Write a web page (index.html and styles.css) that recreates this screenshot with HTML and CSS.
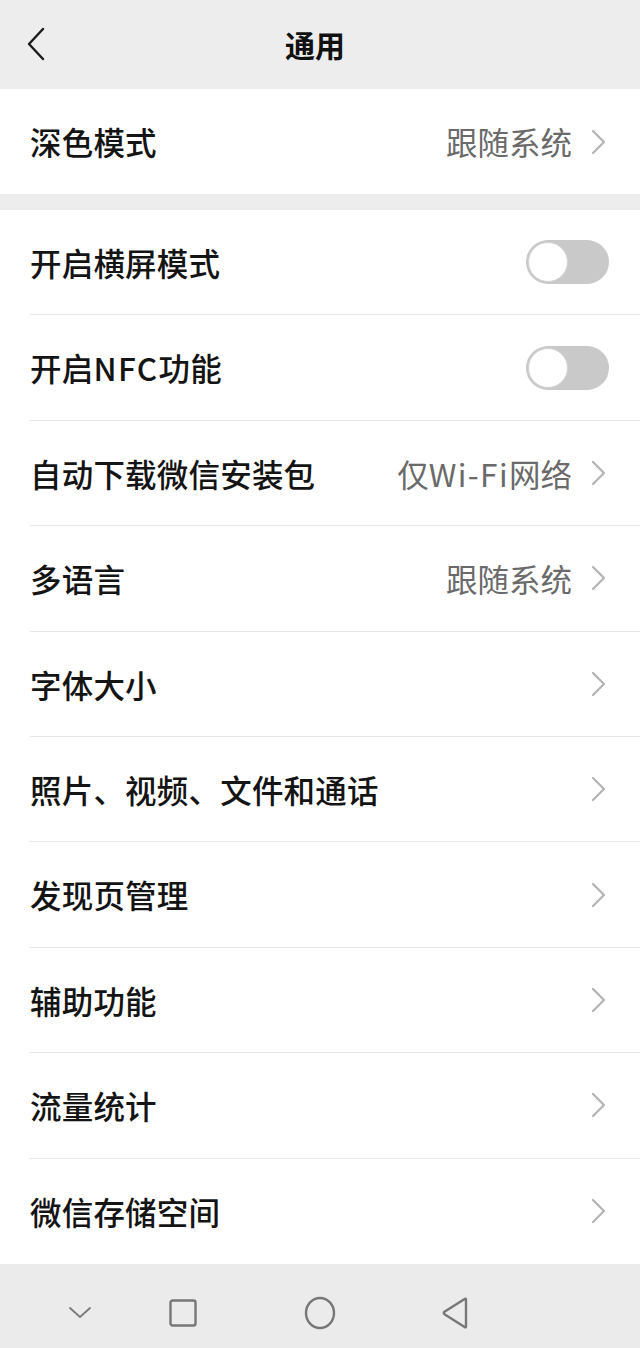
FILE: index.html
```html
<!DOCTYPE html>
<html lang="zh-CN">
<head>
<meta charset="utf-8">
<title>通用</title>
<link rel="stylesheet" href="styles.css">
</head>
<body>
<div class="screen">
  <header class="topbar">
    <span class="back">
      <svg width="20" height="34" viewBox="0 0 20 34"><path d="M17 2 L3 17 L17 32" fill="none" stroke="#1a1a1a" stroke-width="2.4" stroke-linecap="round" stroke-linejoin="round"/></svg>
    </span>
    <h1 class="title">通用</h1>
  </header>

  <section class="group first">
    <div class="row"><div class="row-inner">
      <span class="label">深色模式</span>
      <span class="value">跟随系统</span>
      <svg class="arrow" width="16" height="26" viewBox="0 0 16 26"><path d="M2 2 L13 13 L2 24" fill="none" stroke="#b3b3b3" stroke-width="2.2" stroke-linecap="round" stroke-linejoin="round"/></svg>
    </div></div>
  </section>

  <section class="group second">
    <div class="row"><div class="row-inner">
      <span class="label">开启横屏模式</span>
      <span class="toggle"><span class="knob"></span></span>
    </div></div>
    <div class="row"><div class="row-inner">
      <span class="label">开启<span class="latin">NFC</span>功能</span>
      <span class="toggle"><span class="knob"></span></span>
    </div></div>
    <div class="row"><div class="row-inner">
      <span class="label">自动下载微信安装包</span>
      <span class="value">仅<span class="latin">Wi-Fi</span>网络</span>
      <svg class="arrow" width="16" height="26" viewBox="0 0 16 26"><path d="M2 2 L13 13 L2 24" fill="none" stroke="#b3b3b3" stroke-width="2.2" stroke-linecap="round" stroke-linejoin="round"/></svg>
    </div></div>
    <div class="row"><div class="row-inner">
      <span class="label">多语言</span>
      <span class="value">跟随系统</span>
      <svg class="arrow" width="16" height="26" viewBox="0 0 16 26"><path d="M2 2 L13 13 L2 24" fill="none" stroke="#b3b3b3" stroke-width="2.2" stroke-linecap="round" stroke-linejoin="round"/></svg>
    </div></div>
    <div class="row"><div class="row-inner">
      <span class="label">字体大小</span>
      <svg class="arrow" width="16" height="26" viewBox="0 0 16 26"><path d="M2 2 L13 13 L2 24" fill="none" stroke="#b3b3b3" stroke-width="2.2" stroke-linecap="round" stroke-linejoin="round"/></svg>
    </div></div>
    <div class="row"><div class="row-inner">
      <span class="label">照片、视频、文件和通话</span>
      <svg class="arrow" width="16" height="26" viewBox="0 0 16 26"><path d="M2 2 L13 13 L2 24" fill="none" stroke="#b3b3b3" stroke-width="2.2" stroke-linecap="round" stroke-linejoin="round"/></svg>
    </div></div>
    <div class="row"><div class="row-inner">
      <span class="label">发现页管理</span>
      <svg class="arrow" width="16" height="26" viewBox="0 0 16 26"><path d="M2 2 L13 13 L2 24" fill="none" stroke="#b3b3b3" stroke-width="2.2" stroke-linecap="round" stroke-linejoin="round"/></svg>
    </div></div>
    <div class="row"><div class="row-inner">
      <span class="label">辅助功能</span>
      <svg class="arrow" width="16" height="26" viewBox="0 0 16 26"><path d="M2 2 L13 13 L2 24" fill="none" stroke="#b3b3b3" stroke-width="2.2" stroke-linecap="round" stroke-linejoin="round"/></svg>
    </div></div>
    <div class="row"><div class="row-inner">
      <span class="label">流量统计</span>
      <svg class="arrow" width="16" height="26" viewBox="0 0 16 26"><path d="M2 2 L13 13 L2 24" fill="none" stroke="#b3b3b3" stroke-width="2.2" stroke-linecap="round" stroke-linejoin="round"/></svg>
    </div></div>
    <div class="row last"><div class="row-inner">
      <span class="label">微信存储空间</span>
      <svg class="arrow" width="16" height="26" viewBox="0 0 16 26"><path d="M2 2 L13 13 L2 24" fill="none" stroke="#b3b3b3" stroke-width="2.2" stroke-linecap="round" stroke-linejoin="round"/></svg>
    </div></div>
  </section>

  <nav class="navbar">
    <span class="nav-item nav-hide">
      <svg width="24" height="14" viewBox="0 0 24 14"><path d="M2 2 L12 11 L22 2" fill="none" stroke="#7a7a7a" stroke-width="1.8" stroke-linecap="round" stroke-linejoin="round"/></svg>
    </span>
    <span class="nav-item nav-recent">
      <svg width="30" height="30" viewBox="0 0 30 30"><rect x="2.5" y="2.5" width="25" height="25" rx="2" fill="none" stroke="#777" stroke-width="2.4"/></svg>
    </span>
    <span class="nav-item nav-home">
      <svg width="34" height="34" viewBox="0 0 34 34"><ellipse cx="17" cy="17" rx="14" ry="15" fill="none" stroke="#777" stroke-width="2.4"/></svg>
    </span>
    <span class="nav-item nav-back">
      <svg width="30" height="32" viewBox="0 0 30 32"><path d="M26 2.5 L26 29.5 Q26 31 24.6 30 L4.5 17.2 Q3 16 4.5 14.8 L24.6 2 Q26 1 26 2.5 Z" fill="none" stroke="#777" stroke-width="2.4" stroke-linejoin="round"/></svg>
    </span>
  </nav>
</div>
</body>
</html>
```

FILE: styles.css
```css
* { box-sizing: border-box; }

html, body {
  margin: 0;
  padding: 0;
}

body {
  background: #ededed;
  font-family: "Noto Sans CJK SC", "Noto Sans", sans-serif;
  color: #1a1a1a;
}

.screen {
  width: 640px;
  height: 1348px;
  display: flex;
  flex-direction: column;
  background: #ededed;
}

.topbar {
  height: 89px;
  display: flex;
  align-items: center;
  background: #ededed;
  padding-left: 26px;
  padding-bottom: 2px;
}

.back {
  width: 22px;
  height: 34px;
  display: flex;
  align-items: center;
}

.title {
  margin: 0;
  flex: 1;
  text-align: center;
  font-size: 30px;
  font-weight: 700;
  line-height: 1;
  padding-right: 58px;
  color: #111;
}

.group {
  background: #fff;
}

.group.first {
  height: 105px;
}

.group.second {
  margin-top: 16px;
}

.row {
  height: 105.4px;
  padding-left: 30px;
}

.group.first .row {
  height: 105px;
}

.row-inner {
  height: 100%;
  display: flex;
  align-items: center;
  padding-right: 31px;
  border-bottom: 1px solid #e6e6e6;
}

.group.first .row-inner,
.row.last .row-inner {
  border-bottom: none;
}

.label {
  flex: 1;
  font-size: 31.5px;
  font-weight: 500;
  line-height: 1;
  color: #141414;
  padding-top: 1px;
  letter-spacing: 0.2px;
}

.value {
  font-size: 31.5px;
  font-weight: 400;
  line-height: 1;
  color: #6a6a6a;
  margin-right: 19px;
  padding-top: 1px;
}

.latin {
  letter-spacing: 1.4px;
}

.arrow {
  flex: none;
  margin-right: 2px;
}

.toggle {
  width: 83px;
  height: 44px;
  border-radius: 22px;
  background: #c9c9c9;
  display: flex;
  align-items: center;
  padding-left: 2px;
}

.knob {
  width: 40px;
  height: 40px;
  border-radius: 50%;
  background: #fff;
  border: 1px solid #d4d4d4;
}

.navbar {
  flex: 1;
  background: #ebebeb;
  display: flex;
  align-items: center;
  padding-top: 14px;
}

.nav-item {
  display: flex;
  align-items: center;
  justify-content: center;
  width: 40px;
  height: 40px;
}

.nav-hide { margin-left: 60px; }
.nav-recent { margin-left: 63px; }
.nav-home { margin-left: 97px; }
.nav-back { margin-left: 95px; }
```
